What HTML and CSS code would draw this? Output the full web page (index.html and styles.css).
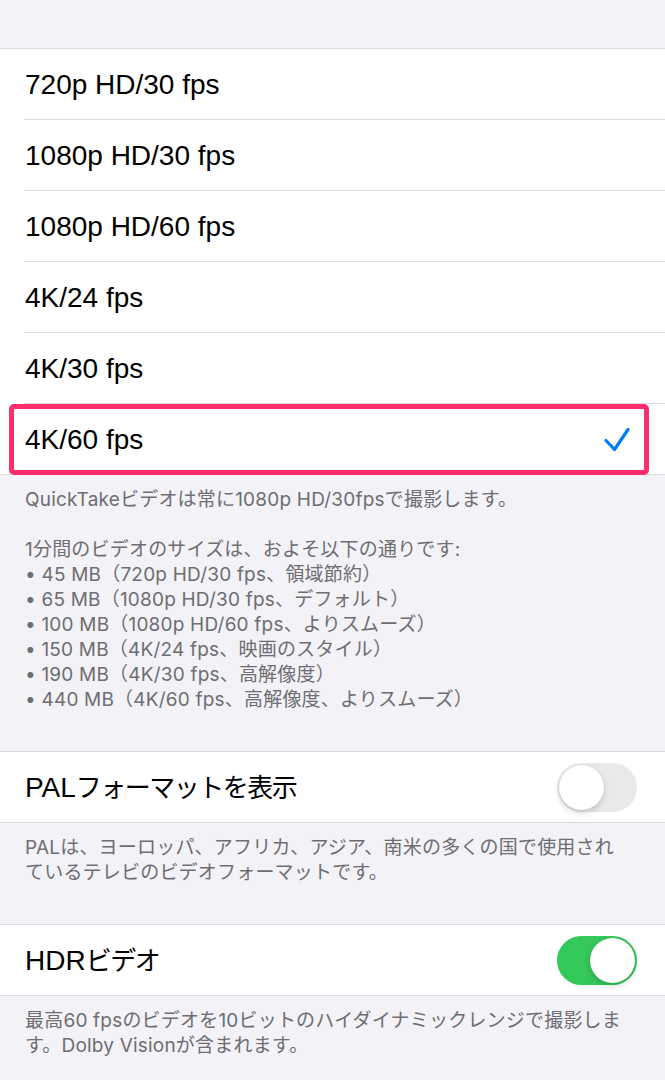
FILE: index.html
```html
<!DOCTYPE html>
<html lang="ja">
<head>
<meta charset="utf-8">
<title>ビデオ撮影</title>
<link rel="stylesheet" href="styles.css">
</head>
<body>
<div class="top-space"></div>

<section class="group">
  <div class="row"><div class="row-inner"><span class="label">720p HD/30 fps</span></div></div>
  <div class="row"><div class="row-inner"><span class="label">1080p HD/30 fps</span></div></div>
  <div class="row"><div class="row-inner"><span class="label">1080p HD/60 fps</span></div></div>
  <div class="row"><div class="row-inner"><span class="label">4K/24 fps</span></div></div>
  <div class="row"><div class="row-inner"><span class="label">4K/30 fps</span></div></div>
  <div class="row selected">
    <div class="row-inner">
      <span class="label">4K/60 fps</span>
      <svg class="check" width="26" height="24" viewBox="0 0 26 24"><polyline points="2,12.5 10.5,21.5 24,1.5" fill="none" stroke="#007aff" stroke-width="3.2" stroke-linecap="round" stroke-linejoin="round"/></svg>
    </div>
    <div class="highlight"></div>
  </div>
</section>

<footer class="note">
  <p>QuickTakeビデオは常に1080p HD/30fpsで撮影します。</p>
  <p class="gap">1分間のビデオのサイズは、およそ以下の通りです:</p>
  <ul class="sizes">
    <li>• 45 MB（720p HD/30 fps、領域節約）</li>
    <li>• 65 MB（1080p HD/30 fps、デフォルト）</li>
    <li>• 100 MB（1080p HD/60 fps、よりスムーズ）</li>
    <li>• 150 MB（4K/24 fps、映画のスタイル）</li>
    <li>• 190 MB（4K/30 fps、高解像度）</li>
    <li>• 440 MB（4K/60 fps、高解像度、よりスムーズ）</li>
  </ul>
</footer>

<section class="group">
  <div class="row">
    <div class="row-inner switch-row">
      <span class="label">PAL<span class="ja">フォーマットを表示</span></span>
      <span class="toggle"><span class="knob"></span></span>
    </div>
  </div>
</section>
<footer class="note">
  <p>PALは、ヨーロッパ、アフリカ、アジア、南米の多くの国で使用されているテレビのビデオフォーマットです。</p>
</footer>

<section class="group">
  <div class="row">
    <div class="row-inner switch-row">
      <span class="label">HDR<span class="ja">ビデオ</span></span>
      <span class="toggle on"><span class="knob"></span></span>
    </div>
  </div>
</section>
<footer class="note">
  <p>最高60 fpsのビデオを10ビットのハイダイナミックレンジで撮影します。Dolby Visionが含まれます。</p>
</footer>
</body>
</html>
```

FILE: styles.css
```css
html, body {
  margin: 0;
  padding: 0;
}
body {
  background: #f2f2f7;
  font-family: "Liberation Sans", "Noto Sans CJK JP", sans-serif;
  color: #000;
  width: 665px;
  overflow: hidden;
}
.top-space {
  height: 48px;
}
.group {
  background: #fff;
  border-top: 1px solid #dcdce0;
  border-bottom: 1px solid #dcdce0;
}
.row {
  position: relative;
  padding-left: 24px;
}
.row-inner {
  height: 70px;
  display: flex;
  align-items: center;
  justify-content: space-between;
  padding-left: 1px;
  padding-right: 35px;
  border-bottom: 1px solid #dcdce0;
}
.row:last-child .row-inner {
  border-bottom: none;
}
.label {
  font-size: 28px;
  line-height: 34px;
  padding-top: 2px;
}
.label .ja {
  font-size: 26px;
  letter-spacing: -1.5px;
}
.check {
  display: block;
  margin-top: 2px;
}
.highlight {
  position: absolute;
  left: 9px;
  right: 16px;
  top: 0;
  bottom: -1px;
  border: 5px solid #ff2d6c;
  border-radius: 5px;
  pointer-events: none;
}
.switch-row {
  padding-right: 28px;
}
.toggle {
  position: relative;
  display: block;
  width: 80px;
  height: 49px;
  border-radius: 25px;
  background: #e9e9eb;
  box-sizing: border-box;
}
.toggle .knob {
  position: absolute;
  top: 2px;
  left: 2px;
  width: 45px;
  height: 45px;
  border-radius: 50%;
  background: #fff;
  box-shadow: 0 3px 6px rgba(0, 0, 0, 0.16), 0 0 0 0.5px rgba(0, 0, 0, 0.06);
}
.toggle.on {
  background: #34c759;
}
.toggle.on .knob {
  left: 33px;
}
.note {
  padding: 12px 36px 39px 25px;
  font-family: "Inter", "Noto Sans CJK JP", sans-serif;
  font-size: 19px;
  line-height: 25px;
  letter-spacing: 0.2px;
  color: #6d6d72;
}
.note p {
  margin: 0;
}
.note .gap {
  margin-top: 25px;
}
.sizes {
  list-style: none;
  margin: 0;
  padding: 0;
}
```
